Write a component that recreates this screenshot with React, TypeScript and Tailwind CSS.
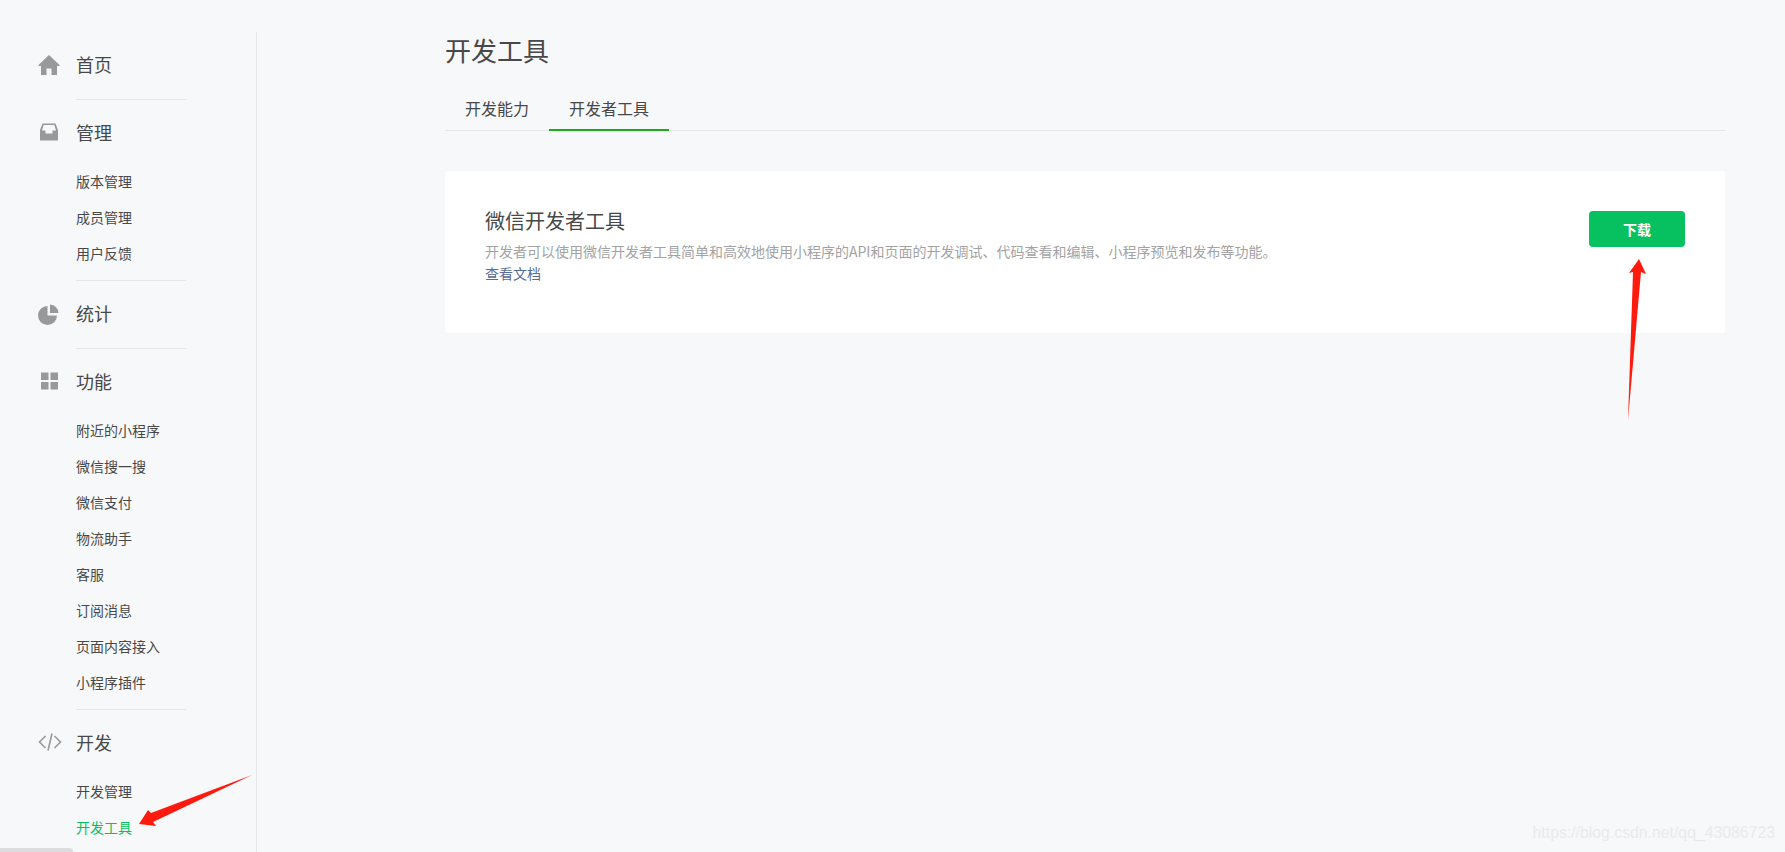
const font = "font-['Microsoft_YaHei','Noto_Sans_CJK_SC','Noto_Sans',sans-serif]";

function HomeIcon() {
  return (
    <svg width="22" height="22" viewBox="0 0 22 22" fill="#999">
      <path d="M11 1 L21.5 11 L21.5 12 L19 12 L19 21 L13.5 21 L13.5 14.5 L8.5 14.5 L8.5 21 L3 21 L3 12 L0.5 12 L0.5 11 Z" />
    </svg>
  );
}

function InboxIcon() {
  return (
    <svg width="22" height="22" viewBox="0 0 22 22" fill="#999">
      <path d="M4.5 2.5 H17.5 L20 9 V19.5 H2 V9 Z M5.7 4 L4 9.5 H7.5 V12.5 H14.5 V9.5 H18 L16.3 4 Z" fillRule="evenodd" />
    </svg>
  );
}

function PieIcon() {
  return (
    <svg width="22" height="22" viewBox="0 0 22 22" fill="#999">
      <path d="M9.5 3 V12.5 H19 A9.5 9.5 0 1 1 9.5 3 Z" />
      <path d="M12 1.5 A9 9 0 0 1 20.5 10 H12 Z" />
    </svg>
  );
}

function GridIcon() {
  return (
    <svg width="22" height="22" viewBox="0 0 22 22" fill="#999">
      <rect x="3" y="2.5" width="7.5" height="7.5" />
      <rect x="12.5" y="2.5" width="7.5" height="7.5" />
      <rect x="3" y="12" width="7.5" height="7.5" />
      <rect x="12.5" y="12" width="7.5" height="7.5" />
    </svg>
  );
}

function CodeIcon() {
  return (
    <svg width="24" height="22" viewBox="0 0 24 22" fill="none" stroke="#999" strokeWidth="1.6">
      <path d="M7.5 5 L1.5 11 L7.5 17" />
      <path d="M16.5 5 L22.5 11 L16.5 17" />
      <path d="M14 2.5 L10 19.5" />
    </svg>
  );
}

const menu = [
  { title: "首页", icon: <HomeIcon />, items: [] as string[] },
  { title: "管理", icon: <InboxIcon />, items: ["版本管理", "成员管理", "用户反馈"] },
  { title: "统计", icon: <PieIcon />, items: [] as string[] },
  {
    title: "功能",
    icon: <GridIcon />,
    items: ["附近的小程序", "微信搜一搜", "微信支付", "物流助手", "客服", "订阅消息", "页面内容接入", "小程序插件"],
  },
  { title: "开发", icon: <CodeIcon />, items: ["开发管理", "开发工具"] },
];

function Sidebar() {
  return (
    <aside className="w-[257px] h-[820px] mt-[32px] shrink-0 border-r border-[#e7e7eb]">
      {menu.map((group, i) => (
        <div key={group.title}>
          <div
            className={
              group.items.length > 0
                ? "flex items-center h-[66px] pb-[2px] pl-[38px]"
                : "flex items-center h-[67px] pb-[2px] pl-[38px]"
            }
          >
            <span className="w-[38px] flex">{group.icon}</span>
            <span className="text-[18px] text-[#484848]">{group.title}</span>
          </div>
          {group.items.length > 0 && (
            <ul className="-mt-[3px] pb-[9px]">
              {group.items.map((item) => (
                <li
                  key={item}
                  className={
                    item === "开发工具"
                      ? "h-9 leading-9 pl-[76px] text-sm text-[#07c160]"
                      : "h-9 leading-9 pl-[76px] text-sm text-[#484848]"
                  }
                >
                  {item}
                </li>
              ))}
            </ul>
          )}
          {i < menu.length - 1 && <div className="ml-[76px] w-[110px] h-px bg-[#e7e7eb]" />}
        </div>
      ))}
    </aside>
  );
}

function Main() {
  return (
    <main className="flex-1 pl-[188px] pr-[60px]">
      <h1 className="h-[102px] pt-[30px] text-[26px] leading-[40px] font-normal text-[#484848]">开发工具</h1>
      <div className="-mt-4 h-[45px] flex border-b border-[#e7e7eb]">
        <div className="h-[45px] leading-[44px] px-5 text-base text-[#484848]">开发能力</div>
        <div className="h-[45px] leading-[44px] px-5 text-base text-[#484848] border-b-2 border-[#1aad19]">开发者工具</div>
      </div>
      <section className="mt-10 h-[162px] bg-white rounded-[3px] px-10 pt-[34px] flex justify-between">
        <div>
          <h2 className="text-[20px] leading-[32px] font-normal text-[#484848]">微信开发者工具</h2>
          <p className="mt-[3px] text-sm leading-[22px] text-[#a3a3a3]">
            开发者可以使用微信开发者工具简单和高效地使用小程序的API和页面的开发调试、代码查看和编辑、小程序预览和发布等功能。
          </p>
          <a className="block text-sm leading-[22px] text-[#576b95]">查看文档</a>
        </div>
        <button className="mt-[6px] w-24 h-9 rounded bg-[#07c160] text-white text-sm font-bold">下载</button>
      </section>
    </main>
  );
}

export default function App() {
  return (
    <div className={`relative flex w-[1785px] h-[852px] overflow-hidden bg-[#f7f8fa] ${font}`}>
      <Sidebar />
      <Main />
      {/* annotation arrows */}
      <svg className="absolute inset-0 pointer-events-none" width="1785" height="852" fill="#ff1a0e">
        <polygon points="252,775 151,813 148,810 139,824 156,826 153,822" />
        <polygon points="1628,420 1633,272 1629,273 1639,259 1646,274 1641,272" />
      </svg>
      <div className="absolute left-0 bottom-0 w-[73px] h-1 bg-[#dcdcdf] rounded-tr" />
      <span className="absolute right-[10px] top-[823px] text-[15.8px] leading-5 text-[#e9eaec] font-['Liberation_Sans',sans-serif]">
        https://blog.csdn.net/qq_43086723
      </span>
    </div>
  );
}
